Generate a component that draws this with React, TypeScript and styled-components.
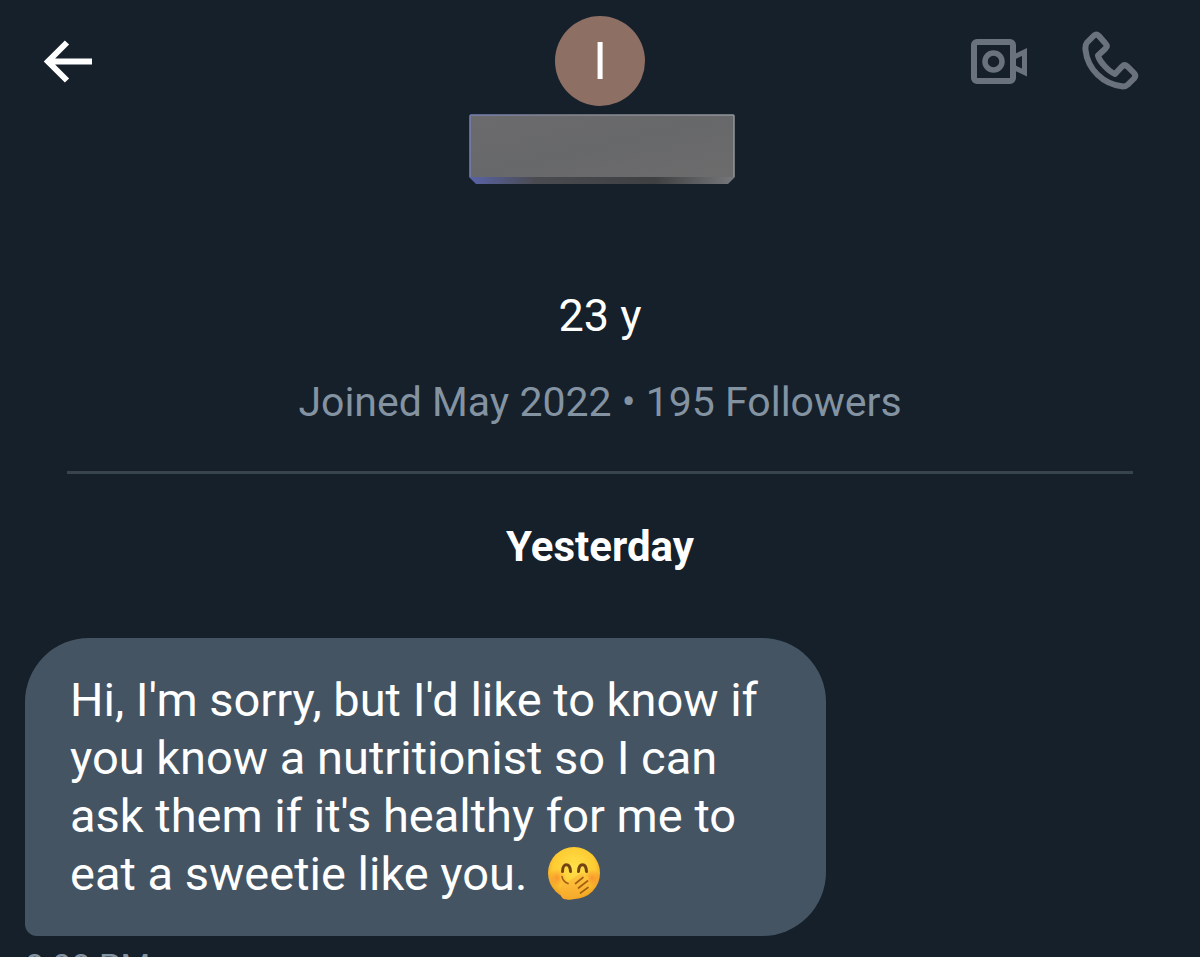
import React from "react";
import styled, { createGlobalStyle } from "styled-components";

const GlobalStyle = createGlobalStyle`
  *, *::before, *::after { box-sizing: border-box; }
  body {
    margin: 0;
    background: #15202a;
    color: #ffffff;
    font-family: Roboto, "Noto Sans", "Liberation Sans", sans-serif;
  }
`;

const Screen = styled.main`
  height: 100vh;
  overflow: hidden;
  background: #15202a;
`;

const Header = styled.header`
  display: grid;
  grid-template-columns: 1fr auto 1fr;
  align-items: start;
  padding: 16px 60px 0 38px;
  height: 200px;
`;

const IconButton = styled.button`
  display: flex;
  align-items: center;
  justify-content: center;
  width: 60px;
  height: 90px;
  padding: 0;
  border: 0;
  background: none;
  color: ${(p) => p.color ?? "#ffffff"};
  cursor: pointer;
`;

const Actions = styled.div`
  display: flex;
  justify-content: flex-end;
  gap: 51px;
`;

const Contact = styled.div`
  display: flex;
  flex-direction: column;
  align-items: center;
  gap: 8px;
  padding-left: 22px;
`;

const Avatar = styled.div`
  width: 90px;
  height: 90px;
  border-radius: 50%;
  background: #8d6f64;
  font-size: 52px;
  line-height: 92px;
  text-align: center;
`;

const NameBar = styled.svg`
  display: block;
  width: 270px;
  height: 71px;
`;

const Profile = styled.section`
  margin: 0 67px;
  padding: 88px 0 41px;
  border-bottom: 3px solid #38444d;
  text-align: center;
`;

const Bio = styled.p`
  margin: 0;
  font-size: 45px;
  line-height: 56px;
`;

const Meta = styled.p`
  margin: 30px 0 0;
  color: #8493a2;
  font-size: 41px;
  line-height: 56px;
`;

const Day = styled.h2`
  margin: 45px 0 0;
  font-size: 42px;
  font-weight: 700;
  line-height: 56px;
  text-align: center;
`;

const Messages = styled.section`
  display: flex;
  flex-direction: column;
  align-items: flex-start;
  padding: 63px 25px 0;
`;

const Bubble = styled.p`
  margin: 0;
  width: 801px;
  max-width: 100%;
  padding: 33px 45px;
  border-radius: 64px 64px 64px 12px;
  background: #445463;
  font-size: 47px;
  line-height: 58px;
`;

const Emoji = styled.svg`
  width: 54px;
  height: 54px;
  margin: -2px 0 -2px 8px;
  vertical-align: -8px;
`;

const Time = styled.time`
  margin-top: 6px;
  color: #8493a2;
  font-size: 34px;
  line-height: 48px;
`;

const BackIcon = () => (
  <svg width="50" height="44" viewBox="0 0 50 44" fill="none" stroke="currentColor" strokeWidth="6" aria-hidden="true">
    <path d="M24 3.5 5 22.500 24 41.500M5 22.500H49" />
  </svg>
);

const VideoIcon = () => (
  <svg width="58" height="48" viewBox="0 0 58 48" fill="none" stroke="currentColor" strokeWidth="6" aria-hidden="true">
    <rect x="4" y="5" width="39" height="39" rx="3" />
    <circle cx="23.500" cy="24.500" r="8.500" strokeWidth="5.500" />
    <path d="M43 20.500 54.500 15V35.500L43 30" strokeWidth="5" />
  </svg>
);

const PhoneIcon = () => (
  <svg width="58" height="60" viewBox="0 0 58 60" fill="none" stroke="currentColor" strokeWidth="6" strokeLinejoin="round" aria-hidden="true">
    <path d="M13 4.500 6 11.500Q4 14 4.500 19C6.500 38 22 53.500 42 55.500Q45 55.500 47 53.500L53 47.500Q55.500 44.500 53 42L46.500 35.500Q43.500 33 41 35.500L34 43C28 40.500 18.500 31 17 24.500L24.500 17.500Q27 15 24.500 12.500L18 5Q15.500 2.500 13 4.500Z" />
  </svg>
);

const RedactedName = () => (
  <NameBar viewBox="0 0 270 71" role="img" aria-label="Name hidden">
    <defs>
      <linearGradient id="barFace" x1="0" y1="0" x2="1" y2="1">
        <stop offset="0" stopColor="#6b6b6d" />
        <stop offset="0.500" stopColor="#676869" />
        <stop offset="1" stopColor="#6c6c6d" />
      </linearGradient>
      <linearGradient id="barEdge" x1="0" y1="0" x2="1" y2="0">
        <stop offset="0" stopColor="#5a64a8" />
        <stop offset="0.250" stopColor="#4a4b50" />
        <stop offset="0.700" stopColor="#3f4042" />
        <stop offset="1" stopColor="#77787b" />
      </linearGradient>
      <linearGradient id="barRim" x1="0" y1="0" x2="1" y2="0">
        <stop offset="0" stopColor="#7780b4" />
        <stop offset="0.350" stopColor="#85878f" />
        <stop offset="1" stopColor="#92959b" />
      </linearGradient>
    </defs>
    <path d="M4 63H270L263 70H11Z" fill="url(#barEdge)" />
    <rect x="5" y="1" width="264" height="62" rx="1" fill="url(#barFace)" />
    <path d="M5 63V2Q5 1 6 1H268Q269 1 269 2V63" fill="none" stroke="url(#barRim)" strokeWidth="1.500" />
  </NameBar>
);

const GiggleEmoji = () => (
  <Emoji viewBox="0 0 54 54" role="img" aria-label="face with hand over mouth">
    <defs>
      <radialGradient id="face" cx="0.500" cy="0.400" r="0.620">
        <stop offset="0" stopColor="#ffe14a" />
        <stop offset="0.650" stopColor="#fecb32" />
        <stop offset="1" stopColor="#ee9a20" />
      </radialGradient>
      <radialGradient id="cheek">
        <stop offset="0" stopColor="#f77a2c" stopOpacity="0.650" />
        <stop offset="1" stopColor="#f77a2c" stopOpacity="0" />
      </radialGradient>
      <linearGradient id="hand" x1="0" y1="0" x2="0" y2="1">
        <stop offset="0" stopColor="#ffc640" />
        <stop offset="1" stopColor="#f6a829" />
      </linearGradient>
    </defs>
    <circle cx="27" cy="27" r="26" fill="url(#face)" />
    <circle cx="10" cy="32" r="9" fill="url(#cheek)" />
    <circle cx="45" cy="32" r="9" fill="url(#cheek)" />
    <path
      d="M15.500 25.500C15.500 16.500 23 16.500 23.500 25.500M31.500 25.500C32 16.500 39 16.500 39.500 25.500"
      fill="none"
      stroke="#724313"
      strokeWidth="3"
      strokeLinecap="round"
    />
    <path
      d="M14 50C12 44 13.500 41 15.500 38C12.500 34 12.500 29 15 29C18 29 17 33 20.500 36L33.500 27.500C36.500 26 38.500 29 36 31.500L31 36L38.500 31C41.500 29.500 43 32.500 40.500 35L34.500 40.500L39 38C42 36.500 43 39.500 41 41.500L35 47C33 52 26 54.500 20 53.500Q15.500 53.500 14 50Z"
      fill="url(#hand)"
    />
    <path
      d="M15 30.500C15.500 34 17 36 21 37.500M36 31.500 28.500 37.500M40.500 35 31.500 42M41 41.500 33.500 47"
      fill="none"
      stroke="#a45f12"
      strokeWidth="1.700"
      strokeLinecap="round"
    />
  </Emoji>
);

export default function App() {
  return (
    <>
      <GlobalStyle />
      <Screen>
        <Header>
          <IconButton type="button" aria-label="Back">
            <BackIcon />
          </IconButton>
          <Contact>
            <Avatar>I</Avatar>
            <RedactedName />
          </Contact>
          <Actions>
            <IconButton type="button" color="#69727d" aria-label="Video call">
              <VideoIcon />
            </IconButton>
            <IconButton type="button" color="#69727d" aria-label="Voice call">
              <PhoneIcon />
            </IconButton>
          </Actions>
        </Header>
        <Profile>
          <Bio>23 y</Bio>
          <Meta>Joined May 2022 • 195 Followers</Meta>
        </Profile>
        <Day>Yesterday</Day>
        <Messages>
          <Bubble>
            Hi, I'm sorry, but I'd like to know if
            <br />
            you know a nutritionist so I can
            <br />
            ask them if it's healthy for me to
            <br />
            eat a sweetie like you. <GiggleEmoji />
          </Bubble>
          <Time>8:08 PM</Time>
        </Messages>
      </Screen>
    </>
  );
}
